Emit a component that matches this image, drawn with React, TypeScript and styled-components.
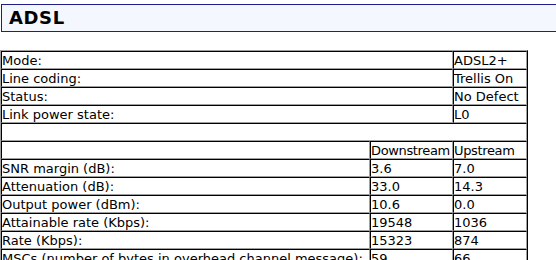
import React from "react";
import styled, { createGlobalStyle } from "styled-components";

const GlobalStyle = createGlobalStyle`
  body {
    margin: 0;
    overflow: hidden;
    background: #ffffff;
    font-family: "DejaVu Sans", Verdana, sans-serif;
  }
`;

// Styles
const Page = styled.div`
  width: 600px;
`;
const Title = styled.div`
  margin: 4px 0 0 1px;
  height: 26px;
  line-height: 26px;
  padding: 0 7px;
  border: 1px solid #1e1e8a;
  background: #f5f7ff;
  font-family: "DejaVu Sans", Verdana, sans-serif;
  font-weight: bold;
  font-size: 18px;
  letter-spacing: 0.6px;
  color: #000;
`;
const Table = styled.table`
  margin-top: 18px;
  width: 528px;
  table-layout: fixed;
  border-collapse: separate;
  border-spacing: 0;
  border: 1px solid;
  border-color: #a0a0a0 #000 #000 #a0a0a0;
  font-size: 13px;
  line-height: 15px;
  color: #000;
`;
const Col = styled.col<{ $w: number }>`
  width: ${(p) => p.$w}px;
`;
const Cell = styled.td<{ $tight?: boolean }>`
  padding: 1px 0 0 0;
  height: 18px;
  box-sizing: border-box;
  border: 1px solid;
  border-color: #000 #a0a0a0 #a0a0a0 #000;
  white-space: nowrap;
  overflow: hidden;
  letter-spacing: ${(p) => (p.$tight ? "-0.35px" : "0")};
`;

const info = [
  ["Mode:", "ADSL2+"],
  ["Line coding:", "Trellis On"],
  ["Status:", "No Defect"],
  ["Link power state:", "L0"],
];

const stats = [
  ["SNR margin (dB):", "3.6", "7.0"],
  ["Attenuation (dB):", "33.0", "14.3"],
  ["Output power (dBm):", "10.6", "0.0"],
  ["Attainable rate (Kbps):", "19548", "1036"],
  ["Rate (Kbps):", "15323", "874"],
  ["MSCs (number of bytes in overhead channel message):", "59", "66"],
  ["Delay (msec):", "8", "4"],
];

const App: React.FC = () => {
  return (
    <Page>
      <GlobalStyle />
      <Title>ADSL</Title>
      <Table>
        <colgroup>
          <Col $w={369} />
          <Col $w={83} />
          <Col $w={74} />
        </colgroup>
        <tbody>
          {info.map(([label, value]) => (
            <tr key={label}>
              <Cell colSpan={2}>{label}</Cell>
              <Cell>{value}</Cell>
            </tr>
          ))}
          <tr>
            <Cell colSpan={3}>&nbsp;</Cell>
          </tr>
          <tr>
            <Cell>&nbsp;</Cell>
            <Cell $tight>Downstream</Cell>
            <Cell $tight>Upstream</Cell>
          </tr>
          {stats.map(([label, down, up]) => (
            <tr key={label}>
              <Cell>{label}</Cell>
              <Cell>{down}</Cell>
              <Cell>{up}</Cell>
            </tr>
          ))}
        </tbody>
      </Table>
    </Page>
  );
};

export default App;
